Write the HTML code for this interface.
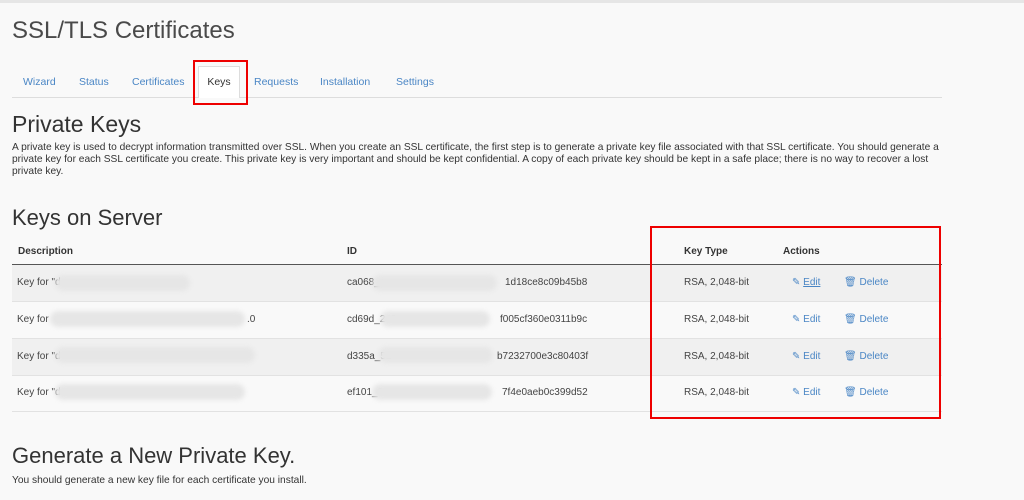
<!DOCTYPE html><html><head><style>
body{margin:0;background:#f9f9f9;font-family:"Liberation Sans",sans-serif;color:#333;width:1024px;height:500px;overflow:hidden;position:relative}
.top{position:absolute;left:0;top:0;width:1024px;height:3px;background:#e6e6e6}
h1{position:absolute;left:12px;top:17px;margin:0;font-weight:300;font-size:24px;color:#4a4a4a}
.tabs{position:absolute;left:12px;top:70px;width:930px;height:27px;border-bottom:1px solid #ddd;font-size:10.5px;color:#4a86c5}
.tabs span{position:absolute;top:6px}
.keys{position:absolute;left:186px;top:-4px;width:42px;background:#fff;border:1px solid #ddd;border-bottom:none;color:#333;text-align:center;line-height:30px;box-sizing:border-box;height:32px}
.red{position:absolute;border:2px solid #e00;box-sizing:border-box}
h2{position:absolute;left:12px;margin:0;font-weight:400;font-size:22px;color:#333}
p{position:absolute;left:12px;margin:0;font-size:10.2px;line-height:12px;width:928px;color:#333}
.th{position:absolute;top:246px;font-size:10px;font-weight:bold}
.hl{position:absolute;left:12px;top:264px;width:930px;height:1px;background:#555}
.row{position:absolute;left:12px;width:930px;height:36px;border-bottom:1px solid #e2e2e2;font-size:10px;color:#444}
.row span{position:absolute;top:12px}
.blur{position:absolute;height:16px;background:#e6e6e6;border-radius:8px;filter:blur(2px)}
.lnk{color:#4a86c5}
</style></head><body>
<div class="top"></div>
<h1>SSL/TLS Certificates</h1>
<div class="tabs">
<span style="left:11px">Wizard</span><span style="left:67px">Status</span><span style="left:120px">Certificates</span><div class="keys">Keys</div><span style="left:242px">Requests</span><span style="left:308px">Installation</span><span style="left:384px">Settings</span>
</div>
<div class="red" style="left:193px;top:60px;width:55px;height:45px"></div>
<h2 style="top:111px;font-size:23px">Private Keys</h2>
<p style="top:142px">A private key is used to decrypt information transmitted over SSL. When you create an SSL certificate, the first step is to generate a private key file associated with that SSL certificate. You should generate a private key for each SSL certificate you create. This private key is very important and should be kept confidential. A copy of each private key should be kept in a safe place; there is no way to recover a lost private key.</p>
<h2 style="top:205px">Keys on Server</h2>
<div class="th" style="left:18px">Description</div><div class="th" style="left:347px">ID</div><div class="th" style="left:684px">Key Type</div><div class="th" style="left:783px">Actions</div>
<div class="hl"></div>
<div class="row" style="top:265px;background:#f0f0f0"><span style="left:5px">Key for "d</span><span style="left:335px">ca068_c</span><span style="left:493px">1d18ce8c09b45b8</span><span style="left:672px">RSA, 2,048-bit</span><span style="left:780px" class="lnk">✎ <u>Edit</u></span><span style="left:832px" class="lnk">🗑 Delete</span></div>
<div class="row" style="top:302px"><span style="left:5px">Key for</span><span style="left:235px">.0</span><span style="left:335px">cd69d_249</span><span style="left:488px">f005cf360e0311b9c</span><span style="left:672px">RSA, 2,048-bit</span><span style="left:780px" class="lnk">✎ Edit</span><span style="left:832px" class="lnk">🗑 Delete</span></div>
<div class="row" style="top:339px;background:#f0f0f0"><span style="left:5px">Key for "d</span><span style="left:335px">d335a_52</span><span style="left:485px">b7232700e3c80403f</span><span style="left:672px">RSA, 2,048-bit</span><span style="left:780px" class="lnk">✎ Edit</span><span style="left:832px" class="lnk">🗑 Delete</span></div>
<div class="row" style="top:375px"><span style="left:5px">Key for "d</span><span style="left:335px">ef101_8</span><span style="left:490px">7f4e0aeb0c399d52</span><span style="left:672px">RSA, 2,048-bit</span><span style="left:780px" class="lnk">✎ Edit</span><span style="left:832px" class="lnk">🗑 Delete</span></div>
<div class="blur" style="left:55px;top:275px;width:135px"></div>
<div class="blur" style="left:372px;top:275px;width:125px"></div>
<div class="blur" style="left:50px;top:311px;width:195px"></div>
<div class="blur" style="left:380px;top:311px;width:110px"></div>
<div class="blur" style="left:55px;top:347px;width:200px"></div>
<div class="blur" style="left:378px;top:347px;width:115px"></div>
<div class="blur" style="left:55px;top:384px;width:190px"></div>
<div class="blur" style="left:372px;top:384px;width:120px"></div>
<div class="red" style="left:650px;top:226px;width:291px;height:193px"></div>
<h2 style="top:443px">Generate a New Private Key.</h2>
<p style="top:475px">You should generate a new key file for each certificate you install.</p>
</body></html>
